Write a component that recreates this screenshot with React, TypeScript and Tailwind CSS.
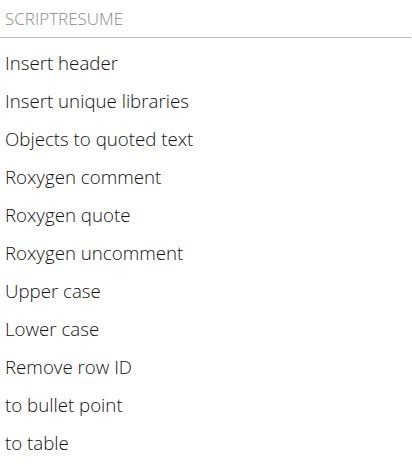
import React from "react";

const items = [
  "Insert header",
  "Insert unique libraries",
  "Objects to quoted text",
  "Roxygen comment",
  "Roxygen quote",
  "Roxygen uncomment",
  "Upper case",
  "Lower case",
  "Remove row ID",
  "to bullet point",
  "to table",
];

export default function App() {
  return (
    <div className="w-[412px] h-[465px] bg-white" style={{ fontFamily: '"Open Sans", "Noto Sans", sans-serif' }}>
      <div className="h-[38px] flex items-center px-[5px] text-[17px] font-light text-[#8a8a8a] border-b border-[#bdbdbd] mr-[1px]">
        SCRIPTRESUME
      </div>
      <div className="flex flex-col pt-[6px]">
        {items.map((t) => (
          <div key={t} className="h-[38px] flex items-center px-[5px] text-[18.7px] font-light text-[#111]">
            {t}
          </div>
        ))}
      </div>
    </div>
  );
}
